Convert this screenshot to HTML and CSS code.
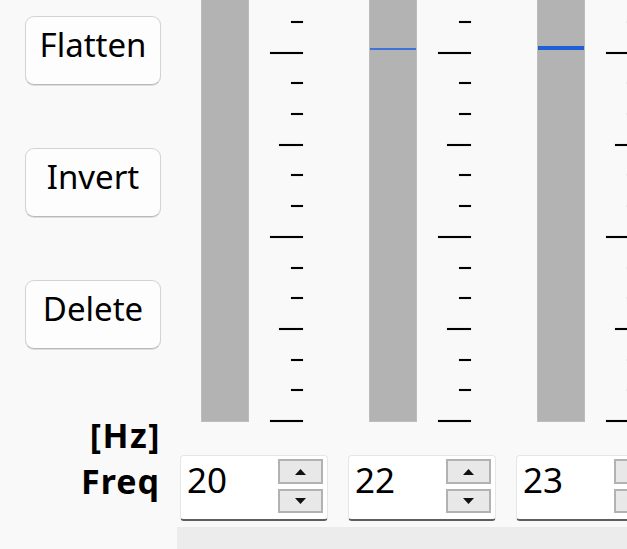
FILE: index.html
```html
<!DOCTYPE html>
<html lang="en">
<head>
    <meta charset="UTF-8">
    <meta name="viewport" content="width=device-width, initial-scale=1.0">
    <title>Graphic EQ</title>
    <link rel="stylesheet" href="styles.css">
</head>
<body>
    <div class="eq">
        <div class="side">
            <button class="btn">Flatten</button>
            <button class="btn">Invert</button>
            <button class="btn">Delete</button>
            <div class="label label-unit">[Hz]</div>
            <div class="label">Freq</div>
        </div>
        <div class="bands-wrap">
            <div class="bands" id="bands"></div>
            <div class="hscroll"></div>
        </div>
    </div>

    <script>
        const bands = [
            { freq: 20, thumb: null },
            { freq: 22, thumb: "thin" },
            { freq: 23, thumb: "thick" }
        ];
        // tick pattern, top to bottom
        const ticks = ["s", "l", "s", "s", "m", "s", "s", "l", "s", "s", "m", "s", "s", "l"];

        const bandsElement = document.getElementById("bands");
        bands.forEach(band => {
            const col = document.createElement("div");
            col.classList.add("band");

            const slider = document.createElement("div");
            slider.classList.add("slider");

            const track = document.createElement("div");
            track.classList.add("track");
            if (band.thumb) {
                const thumb = document.createElement("div");
                thumb.classList.add("thumb", "thumb-" + band.thumb);
                track.appendChild(thumb);
            }
            slider.appendChild(track);

            const scale = document.createElement("div");
            scale.classList.add("scale");
            ticks.forEach(t => {
                const tick = document.createElement("div");
                tick.classList.add("tick", "tick-" + t);
                scale.appendChild(tick);
            });
            slider.appendChild(scale);
            col.appendChild(slider);

            const spin = document.createElement("div");
            spin.classList.add("spin");
            spin.innerHTML = `
                <span class="spin-value">${band.freq}</span>
                <span class="spin-btns">
                    <span class="spin-btn"><svg width="11" height="6" viewBox="0 0 11 6"><path d="M0 6 L5.5 0 L11 6 Z" fill="#111"/></svg></span>
                    <span class="spin-btn"><svg width="11" height="6" viewBox="0 0 11 6"><path d="M0 0 L5.5 6 L11 0 Z" fill="#111"/></svg></span>
                </span>`;
            col.appendChild(spin);
            bandsElement.appendChild(col);
        });
    </script>
</body>
</html>
```

FILE: styles.css
```css
body {
    margin: 0;
    padding: 0;
    background-color: #f9f9f9;
    font-family: "Noto Sans", "Open Sans", sans-serif;
    color: #000;
    overflow: hidden;
}
.eq {
    display: flex;
    height: 549px;
}
.side {
    width: 177px;
    flex-shrink: 0;
    display: flex;
    flex-direction: column;
    align-items: flex-end;
    padding-top: 16px;
    box-sizing: border-box;
}
.btn {
    width: 136px;
    height: 69px;
    margin-right: 16px;
    margin-bottom: 63px;
    box-sizing: border-box;
    padding: 11px 0 0 0;
    display: flex;
    justify-content: center;
    align-items: flex-start;
    background-color: #fdfdfd;
    border: 1px solid #d3d3d3;
    border-bottom-color: #b9b9b9;
    border-radius: 9px;
    box-shadow: 0 1px 0 #dedede;
    font-family: inherit;
    font-size: 33px;
    line-height: 34px;
    color: #000;
}
.btn:nth-of-type(3) {
    margin-bottom: 69px;
}
.label {
    margin-right: 17px;
    font-weight: bold;
    font-size: 34px;
    line-height: 34px;
    letter-spacing: 1px;
}
.label-unit {
    margin-bottom: 12px;
    margin-right: 16px;
    font-size: 34px;
    letter-spacing: 1.5px;
}
.bands-wrap {
    flex: 1;
    display: flex;
    flex-direction: column;
    overflow: hidden;
}
.bands {
    display: flex;
}
.band {
    width: 168px;
    flex-shrink: 0;
}
.slider {
    display: flex;
    height: 422px;
}
.track {
    width: 48px;
    margin-left: 24px;
    box-sizing: border-box;
    background-color: #b3b3b3;
    border: 1px solid #bdbdbd;
    border-top: 0;
}
.thumb {
    background-color: #1f5fd6;
}
.thumb-thin {
    margin-top: 48px;
    height: 2px;
    background-color: #3d72d6;
}
.thumb-thick {
    margin-top: 46px;
    height: 4px;
}
.scale {
    width: 33px;
    margin-left: 21px;
    padding-top: 21px;
    box-sizing: border-box;
    display: flex;
    flex-direction: column;
    justify-content: space-between;
    align-items: flex-end;
}
.tick {
    height: 2px;
    background-color: #000;
    box-shadow: 0 0 1px rgba(0, 0, 0, 0.5);
}
.tick-s {
    width: 12px;
}
.tick-m {
    width: 24px;
}
.tick-l {
    width: 33px;
}
.spin {
    margin: 33px 0 0 3px;
    width: 148px;
    height: 66px;
    box-sizing: border-box;
    display: flex;
    justify-content: space-between;
    background-color: #fff;
    border: 1px solid #e6e6e6;
    border-bottom: 2px solid #5e5e5e;
    border-radius: 4px;
}
.spin-value {
    padding: 6px 0 0 6px;
    font-size: 35px;
    line-height: 35px;
}
.spin-btns {
    display: flex;
    flex-direction: column;
    gap: 5px;
    padding: 3px 4px 0 0;
}
.spin-btn {
    width: 45px;
    height: 25px;
    box-sizing: border-box;
    display: flex;
    justify-content: center;
    align-items: center;
    background-color: #e8e8e8;
    border: 2px solid #b2b2b2;
}
.spin-btn + .spin-btn {
    height: 24px;
}
.hscroll {
    margin-top: 6px;
    height: 22px;
    background-color: #ececec;
}
```
